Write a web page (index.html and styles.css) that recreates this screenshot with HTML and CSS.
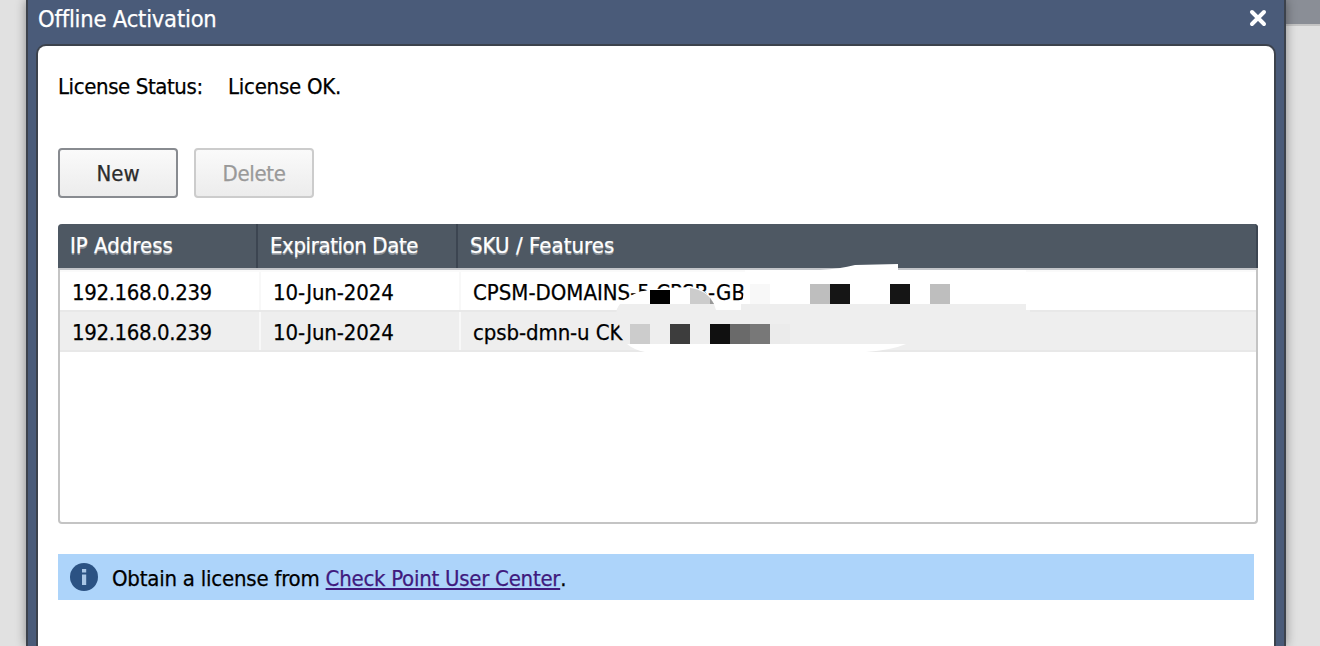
FILE: index.html
```html
<!DOCTYPE html>
<html lang="en">
<head>
<meta charset="utf-8">
<title>Offline Activation</title>
<link rel="stylesheet" href="styles.css">
</head>
<body>
<div class="page-strip"></div>
<main class="dialog">
  <header class="titlebar">
    <h1>Offline Activation</h1>
    <button class="close" aria-label="Close"><svg width="18" height="18" viewBox="0 0 18 18"><path d="M3 3L15 15M15 3L3 15" stroke="#fff" stroke-width="4" stroke-linecap="round"/></svg></button>
  </header>
  <section class="panel">
    <div class="status"><span class="status-label">License Status:</span><span class="status-value">License OK.</span></div>
    <div class="toolbar"><button class="btn">New</button><button class="btn disabled" disabled>Delete</button></div>
    <div class="grid">
      <div class="grid-head"><div>IP Address</div><div class="head-date">Expiration Date</div><div class="head-sku">SKU / Features</div></div>
      <div class="grid-body">
        <div class="row"><div class="ip">192.168.0.239</div><div class="date">10-Jun-2024</div><div class="sku-a">CPSM-DOMAINS-5 CPSB-GB</div></div>
        <div class="row alt"><div class="ip">192.168.0.239</div><div class="date">10-Jun-2024</div><div class="sku-b">cpsb-dmn-u CK</div></div>
      </div>
      <svg class="redaction" width="420" height="92" viewBox="610 262 420 92">
        <path fill="#fff" d="M820 270Q840 269 855 265L898 264V270H1026V310H741L745 284V270Z"/>
        <path fill="#fff" d="M616 310Q618 302 628 298Q636 291 650 290Q680 286 697 288Q710 293 715 304H742V310Z"/>
        <path fill="#eee" d="M620 304H714L716 310H741V304H1026V310H1030V344H628L622 338L619 324Q613 312 620 304Z"/>
        <path fill="#fff" d="M627 344H906Q892 350 866 352H645Q634 350 627 344Z"/>
        <path fill="#ccc" d="M690 288Q707 290 714 304H690Z"/>
        <path fill="#999" d="M710 298L714 304H710Z"/>
        <path d="M650 290h20v14h-20z"/>
        <path fill="#f8f8f8" d="M750 284h20v20h-20z"/>
        <path fill="#bebebe" d="M810 284h20v20h-20zM930 284h20v20h-20z"/>
        <path fill="#151515" d="M830 284h20v20h-20zM890 284h20v20h-20z"/>
        <path fill="#ccc" d="M630 324h20v20h-20z"/>
        <path fill="#3d3d3d" d="M670 324h20v20h-20z"/>
        <path fill="#101010" d="M710 324h20v20h-20z"/>
        <path fill="#6a6a6a" d="M730 324h20v20h-20z"/>
        <path fill="#787878" d="M750 324h20v20h-20z"/>
        <path fill="#ebebeb" d="M770 324h20v20h-20z"/>
      </svg>
    </div>
    <div class="notice">
      <svg width="28" height="28" viewBox="0 0 28 28"><circle cx="14" cy="14" r="14" fill="#2b5283"/><path fill="#a9c6e6" d="M12 6h4.2v3.6h-4.200zM12 11.500h4.200v10.500h-4.200z"/></svg>
      <p><span class="n-text">Obtain a license from </span><a class="n-link" href="#">Check Point User Center</a>.</p>
    </div>
  </section>
</main>
</body>
</html>
```

FILE: styles.css
```css
* { box-sizing: border-box; }
body { margin: 0; height: 646px; overflow: hidden; position: relative; background: #e1e1e1; font: 22px/28px "DejaVu Sans Condensed", "DejaVu Sans", sans-serif; font-stretch: condensed; color: #000; -webkit-text-stroke: .25px currentColor; }
.page-strip { position: absolute; top: 0; right: 0; width: 40px; height: 26px; background: #8a8e96; border-bottom: 2px solid #c4c4c4; }
.dialog { position: relative; width: 1260px; height: 646px; margin-left: 26px; padding: 0 8px; display: flex; flex-direction: column; background: #4a5b79; border: solid #3c424c; border-width: 0 2px; box-shadow: 0 0 10px rgba(0,0,0,.4); }
.titlebar { height: 44px; display: flex; justify-content: space-between; align-items: flex-start; padding: 5px 9px 0 2px; }
h1 { margin: 0; font: inherit; font-size: 23.5px; letter-spacing: -.2px; color: #fff; }
button { font: inherit; }
.close { width: 18px; height: 18px; padding: 0; margin-top: 4px; border: 0; background: none; display: flex; }
.panel { flex: 1; background: #fff; border: 2px solid #3c424c; border-bottom: 0; border-radius: 10px 10px 0 0; padding: 27px 16px 0 20px; }
.status { display: flex; height: 28px; }
.status-label { width: 170px; letter-spacing: -.4px; }
.status-value { letter-spacing: -.25px; }
.toolbar { display: flex; gap: 16px; margin-top: 47px; }
.btn { width: 120px; height: 50px; padding: 2px 0 0; border: 2px solid #888b90; border-radius: 4px; background: linear-gradient(#fafafa, #ececec); color: #2c2c2c; }
.btn.disabled { border-color: #ccc; color: #999; letter-spacing: -.35px; }
.grid { position: relative; width: 1200px; height: 300px; margin-top: 26px; border-radius: 4px; background: #fff; border: 2px solid #c4c4c4; border-top: 0; }
.grid-head { display: grid; grid-template-columns: 200px 200px 1fr; height: 44px; margin: 0 -2px; border-radius: 4px 4px 0 0; background: #4e5863; color: #fff; text-shadow: 0 2px 0 rgba(255,255,255,.35); }
.grid-head div { padding: 8px 0 0 12px; border-right: 2px solid #3c4551; }
.grid-head div:last-child { border-radius: 0 4px 0 0; }
.head-date { letter-spacing: -.4px; }
.head-sku { letter-spacing: .05px; }
.grid-body { border-top: 2px solid #c3c5c9; }
.row { display: grid; grid-template-columns: 201px 200px 1fr; height: 42px; border-bottom: 2px solid #e8e8e8; border-top: 2px solid #fafafa; }
.row.alt { height: 40px; border-top: 0; background: #eee; }
.row div { padding: 7px 0 0 12px; border-right: 2px solid #f8f8f8; white-space: nowrap; }
.row div:last-child { border: 0; }
.ip { letter-spacing: -.38px; }
.date { letter-spacing: -.12px; }
.sku-b { letter-spacing: -.1px; }
.redaction { position: absolute; left: 550px; top: 38px; }
.notice { display: flex; align-items: center; width: 1196px; height: 46px; margin-top: 30px; padding-left: 12px; gap: 14px; background: #add4fa; }
.notice p { margin: 3px 0 0; white-space: pre; }
.n-text { letter-spacing: -.22px; }
.n-link { color: #3f1a7e; letter-spacing: -.26px; }
```
